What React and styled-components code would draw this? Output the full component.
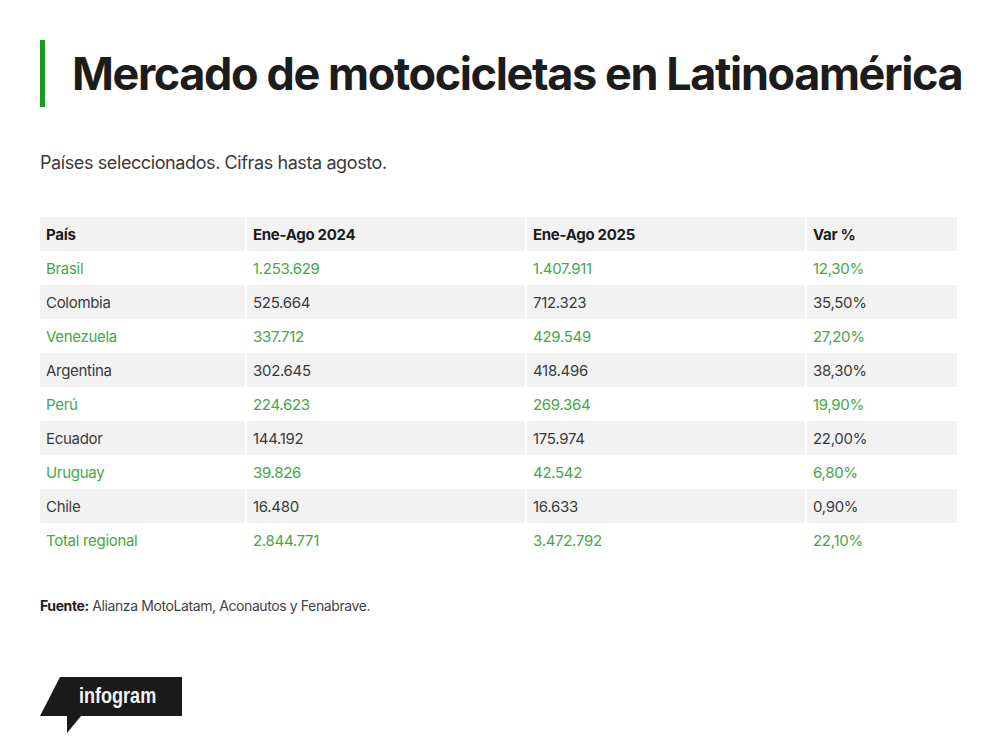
import styled, { createGlobalStyle } from "styled-components";

const GlobalStyle = createGlobalStyle`
    html, body {
        margin: 0;
        padding: 0;
        background: #ffffff;
    }
    body {
        font-family: Inter, "Liberation Sans", sans-serif;
        color: #2b2b2b;
    }
`;

const rows = [
    ["Brasil", "1.253.629", "1.407.911", "12,30%"],
    ["Colombia", "525.664", "712.323", "35,50%"],
    ["Venezuela", "337.712", "429.549", "27,20%"],
    ["Argentina", "302.645", "418.496", "38,30%"],
    ["Perú", "224.623", "269.364", "19,90%"],
    ["Ecuador", "144.192", "175.974", "22,00%"],
    ["Uruguay", "39.826", "42.542", "6,80%"],
    ["Chile", "16.480", "16.633", "0,90%"],
    ["Total regional", "2.844.771", "3.472.792", "22,10%"]
];

const Page = styled.div`
    width: 1000px;
    height: 749px;
    padding: 40px 43px 0 40px;
    box-sizing: border-box;
    display: flex;
    flex-direction: column;
`;

const Header = styled.header`
    display: flex;
    align-items: center;
    gap: 27px;
    height: 67px;
`;

const Accent = styled.span`
    flex: 0 0 5px;
    align-self: stretch;
    background: #1a9a22;
`;

const Title = styled.h1`
    margin: 0;
    font-size: 45px;
    font-weight: 700;
    letter-spacing: -1.4px;
    color: #1c1c1c;
    white-space: nowrap;
`;

const Subtitle = styled.p`
    margin: 45px 0 0;
    font-size: 18px;
    letter-spacing: -0.4px;
    color: #3a3a3a;
`;

const Table = styled.div`
    margin-top: 44px;
    display: grid;
    grid-template-columns: 205px 278px 278px 150px;
    column-gap: 2px;
    row-gap: 0;
`;

const Cell = styled.div`
    height: 34px;
    display: flex;
    align-items: center;
    padding-left: 6px;
    font-size: 15px;
    letter-spacing: -0.3px;
    font-weight: ${(p) => (p.$head ? 700 : 400)};
    color: ${(p) => (p.$head ? "#1c1c1c" : p.$green ? "#45a845" : "#3a3a3a")};
    background: ${(p) => (p.$shade ? "#f2f2f2" : "#ffffff")};
`;

const Source = styled.p`
    margin: 40px 0 0;
    font-size: 14px;
    letter-spacing: -0.4px;
    color: #444;

    strong {
        color: #1c1c1c;
        font-weight: 700;
    }
`;

const Logo = styled.div`
    margin-top: 63px;
    position: relative;
    width: 143px;
    height: 56px;
`;

// no narrow face installed, so squeeze a regular one
const LogoText = styled.span`
    position: absolute;
    left: 39px;
    top: 6px;
    font-family: "Liberation Sans", Arial, sans-serif;
    font-weight: 700;
    font-size: 22px;
    line-height: normal;
    color: #f2f2f2;
    transform: scaleX(0.82);
    transform-origin: left center;
`;

export default function App() {
    return (
        <>
            <GlobalStyle />
            <Page>
                <Header>
                    <Accent />
                    <Title>Mercado de motocicletas en Latinoamérica</Title>
                </Header>
                <Subtitle>Países seleccionados. Cifras hasta agosto.</Subtitle>
                <Table>
                    {["País", "Ene-Ago 2024", "Ene-Ago 2025", "Var %"].map((h) => (
                        <Cell key={h} $head $shade>{h}</Cell>
                    ))}
                    {rows.map((row, i) =>
                        row.map((value, j) => (
                            <Cell key={`${i}-${j}`} $green={i % 2 === 0} $shade={i % 2 === 1}>
                                {value}
                            </Cell>
                        ))
                    )}
                </Table>
                <Source>
                    <strong>Fuente:</strong> Alianza MotoLatam, Aconautos y Fenabrave.
                </Source>
                <Logo>
                    <svg width="143" height="56" viewBox="0 0 143 56">
                        <polygon points="0,39 20,0 142,0 142,39 41,39 27,56 27,39" fill="#1a1a1a" />
                    </svg>
                    <LogoText>infogram</LogoText>
                </Logo>
            </Page>
        </>
    );
}
